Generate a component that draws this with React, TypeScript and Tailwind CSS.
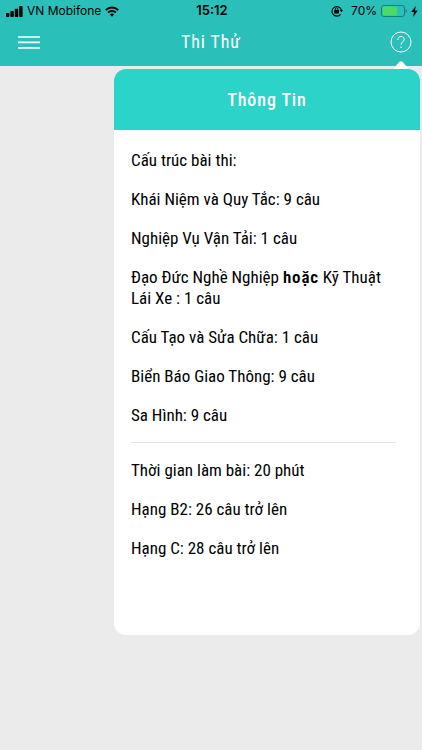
import type { ReactNode } from 'react'

const structure: ReactNode[] = [
  'Cấu trúc bài thi:',
  'Khái Niệm và Quy Tắc: 9 câu',
  'Nghiệp Vụ Vận Tải: 1 câu',
  <>
    Đạo Đức Nghề Nghiệp <strong className="font-semibold tracking-wider">hoặc</strong> Kỹ Thuật Lái Xe : 1 câu
  </>,
  'Cấu Tạo và Sửa Chữa: 1 câu',
  'Biển Báo Giao Thông: 9 câu',
  'Sa Hình: 9 câu',
]

const rules = ['Thời gian làm bài: 20 phút', 'Hạng B2: 26 câu trở lên', 'Hạng C: 28 câu trở lên']

function SignalIcon() {
  return (
    <svg width="17" height="11" viewBox="0 0 17 11" fill="currentColor" aria-hidden="true">
      <rect x="0" y="7" width="3.4" height="4" rx="0.8" />
      <rect x="4.4" y="5" width="3.4" height="6" rx="0.8" />
      <rect x="8.8" y="2.7" width="3.4" height="8.3" rx="0.8" />
      <rect x="13.2" y="0" width="3.4" height="11" rx="0.8" />
    </svg>
  )
}

function WifiIcon() {
  return (
    <svg width="14" height="11" viewBox="0 0 14 11" fill="none" stroke="currentColor" strokeWidth="2" aria-hidden="true">
      <path d="M0.8 4.1a8.8 8.8 0 0 1 12.4 0" />
      <path d="M3.1 6.5a5.5 5.5 0 0 1 7.8 0" />
      <path d="M7 10.7 4.9 8.5a3 3 0 0 1 4.2 0z" fill="currentColor" stroke="none" />
    </svg>
  )
}

function RotationLockIcon() {
  return (
    <svg width="12" height="12" viewBox="0 0 12 12" fill="none" stroke="currentColor" aria-hidden="true">
      <path d="M9.6 9.3A4.8 4.8 0 1 1 10.4 5" strokeWidth="1.1" />
      <path d="M8.7 5h3.3l-1.6 2.2z" fill="currentColor" stroke="none" />
      <rect x="3.2" y="5" width="4.8" height="3.6" rx="0.4" fill="currentColor" stroke="none" />
      <path d="M4.3 5.2V4.1a1.3 1.3 0 0 1 2.6 0v1.1" strokeWidth="0.9" />
    </svg>
  )
}

function BatteryIcon() {
  return (
    <svg width="26" height="12" viewBox="0 0 26 12" fill="none" aria-hidden="true">
      <rect x="0.5" y="0.5" width="23" height="11" rx="2.5" stroke="#14807c" />
      <rect x="1.5" y="1.5" width="14.5" height="9" rx="1" fill="#4cd964" />
      <path d="M24.600 4v4c1.600-.6 1.600-3.400 0-4z" fill="#14807c" />
    </svg>
  )
}

function BoltIcon() {
  return (
    <svg width="7" height="11" viewBox="0 0 6 10" fill="currentColor" aria-hidden="true">
      <path d="M4.2 0 0 5.5h2.6L1.7 10 6 4.2H3.4z" />
    </svg>
  )
}

function StatusBar() {
  return (
    <div className="grid h-[22px] grid-cols-[1fr_auto_1fr] items-center pr-1 pl-1.5 font-[Inter,sans-serif] text-xs text-black">
      <div className="flex items-center gap-1">
        <SignalIcon />
        <span>VN Mobifone</span>
        <WifiIcon />
      </div>
      <span className="text-[13px] font-semibold">15:12</span>
      <div className="flex items-center justify-end gap-1">
        <RotationLockIcon />
        <span className="ml-1">70%</span>
        <BatteryIcon />
        <BoltIcon />
      </div>
    </div>
  )
}

export default function App() {
  return (
    <div className="min-h-screen bg-[#ebebeb] font-['Roboto_Condensed',Roboto,sans-serif]">
      <header className="bg-[#2abfb9]">
        <StatusBar />
        <div className="grid h-11 grid-cols-[1fr_auto_1fr] items-center px-2.5 pb-1 text-white">
          <button type="button" aria-label="Menu" className="ml-2 w-fit">
            <svg width="22" height="14" viewBox="0 0 22 14" stroke="currentColor" strokeWidth="1.7">
              <path d="M0 2h22M0 7.400h22M0 12.800h22" />
            </svg>
          </button>
          <h1 className="text-lg tracking-wider">Thi Thử</h1>
          <button type="button" aria-label="Thông Tin" className="w-fit justify-self-end">
            <svg width="22" height="22" viewBox="0 0 22 22" fill="none" stroke="currentColor">
              <circle cx="11" cy="11" r="10" />
              <path d="M7.800 8.900c0-2.200 1.400-3.500 3.200-3.500s3.200 1.300 3.200 3c0 2.400-3.100 2.600-3.100 5.300" />
              <circle cx="11.1" cy="16.2" r="0.8" fill="currentColor" stroke="none" />
            </svg>
          </button>
        </div>
      </header>

      <section className="relative mt-[3px] mr-0.5 ml-auto w-[306px] max-w-full rounded-xl bg-white pb-[76px]">
        <svg
          className="absolute -top-2 right-3"
          width="14"
          height="8"
          viewBox="0 0 14 8"
          fill="white"
          aria-hidden="true"
        >
          <path d="M0 7 5.500 .8q1.500-1.200 3 0L14 7v1H0z" />
        </svg>
        <h2 className="rounded-t-xl bg-[#2bd3c9] py-5 text-center text-lg leading-[21px] font-medium tracking-wider text-white">
          Thông Tin
        </h2>
        <div className="pt-5 pr-6 pl-[17px] text-[17px] leading-[21px] text-black">
          <div className="space-y-[18px]">
            {structure.map((line, i) => (
              <p key={i}>{line}</p>
            ))}
          </div>
          <hr className="mt-4 mb-[17px] border-[#e4e4e4]" />
          <div className="space-y-[18px]">
            {rules.map((line) => (
              <p key={line}>{line}</p>
            ))}
          </div>
        </div>
      </section>
    </div>
  )
}
